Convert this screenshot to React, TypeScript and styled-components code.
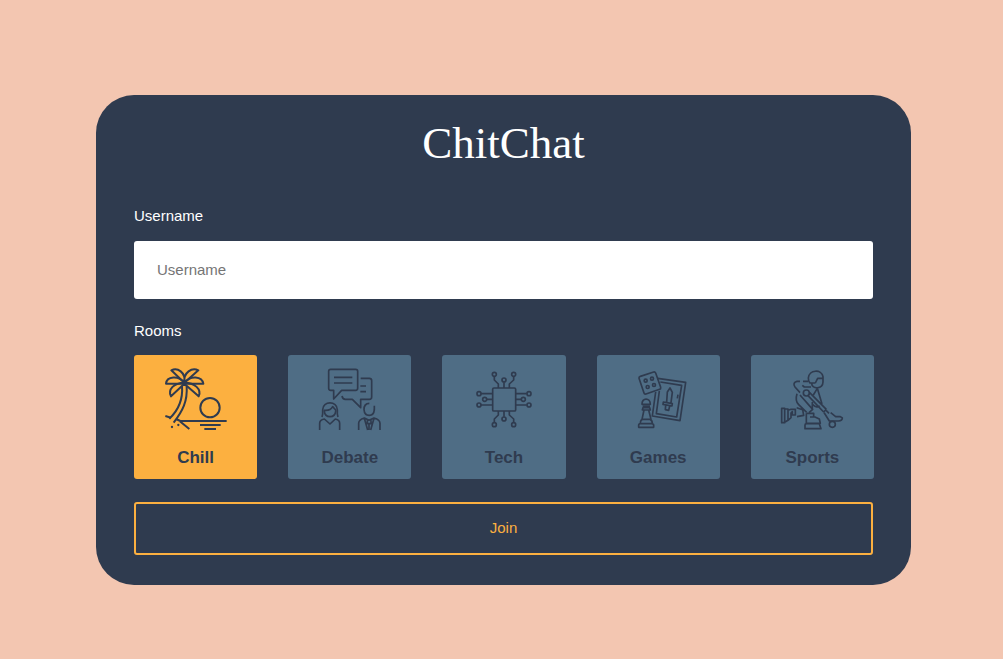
import React, { useState } from "react";
import styled, { createGlobalStyle } from "styled-components";

const navy = "#2f3b4f";
const amber = "#fcb040";
const slate = "#4f6d85";

const GlobalStyle = createGlobalStyle`
  *, *::before, *::after { box-sizing: border-box; }
  body {
    margin: 0;
    background: #f3c6b1;
    font-family: "Liberation Sans", Arial, sans-serif;
    font-size: 15px;
    line-height: 18px;
  }
`;

const Page = styled.main`
  min-height: 100vh;
  padding: 95px 92px 40px 96px;
`;

const Card = styled.form`
  display: flex;
  flex-direction: column;
  padding: 20px 38px 30px;
  border-radius: 38px;
  background: ${navy};
  color: #fff;
`;

const Title = styled.h1`
  margin: 0 0 36px;
  font-family: "Liberation Serif", "Times New Roman", serif;
  font-size: 45px;
  font-weight: 400;
  line-height: 56px;
  text-align: center;
`;

const FieldLabel = styled.label`
  margin-bottom: 16px;
`;

const TextInput = styled.input`
  width: 100%;
  height: 58px;
  margin-bottom: 23px;
  padding: 0 23px 2px;
  border: 0;
  border-radius: 3px;
  background: #fff;
  color: ${navy};
  font: inherit;
  &::placeholder { color: #757575; }
`;

const Rooms = styled.fieldset`
  min-width: 0;
  margin: 0 -1px 23px 0;
  padding: 0;
  border: 0;
`;

const RoomsLegend = styled.legend`
  margin-bottom: 15px;
  padding: 0;
`;

const RoomGrid = styled.div`
  display: grid;
  grid-template-columns: repeat(5, 1fr);
  gap: 31px;
`;

const RoomTile = styled.label<{ $active: boolean }>`
  position: relative;
  display: flex;
  flex-direction: column;
  align-items: center;
  height: 124px;
  padding-top: 5px;
  border-radius: 3px;
  background: ${(p) => (p.$active ? amber : slate)};
  color: ${navy};
  cursor: pointer;
`;

const RoomRadio = styled.input`
  position: absolute;
  inset: 0;
  width: 100%;
  height: 100%;
  margin: 0;
  opacity: 0;
  cursor: pointer;
`;

const RoomIcon = styled.svg`
  width: 80px;
  height: 80px;
  fill: none;
  stroke: currentColor;
  stroke-width: 5;
  stroke-linejoin: round;
`;

const RoomName = styled.span`
  margin-top: 8px;
  font-size: 17px;
  font-weight: 700;
  line-height: 20px;
`;

const JoinButton = styled.button`
  height: 53px;
  padding: 0 0 2px;
  border: 2px solid ${amber};
  border-radius: 3px;
  background: transparent;
  color: ${amber};
  font: inherit;
  cursor: pointer;
`;

const rooms = [
  {
    name: "Chill",
    art: (
      <g strokeWidth="6">
        <path d="M85 68 46 31C64 22 90 36 85 68 82 36 108 22 127 31L85 68" />
        <path d="M85 68C68 45 32 48 30 71H142C138 48 104 45 85 68" />
        <path d="M85 68C55 68 34 88 45 109L85 71 128 109C138 88 116 68 85 68" />
        <path d="M78 78C81 116 66 152 40 176M92 78C95 124 80 153 53 188" />
        <path d="M28 168 45 173M60 177 73 183H212M66 179 100 207M132 195H194M145 207H180" />
        <circle cx="162" cy="143" r="29" />
        <g fill="currentColor" stroke="none">
          <circle cx="48" cy="201" r="3.5" />
          <circle cx="67" cy="195" r="3.5" />
        </g>
      </g>
    ),
  },
  {
    name: "Debate",
    art: (
      <>
        <path d="M62 28H137Q143 28 143 34V85Q143 91 137 91H95L71 117V91H62Q56 91 56 85V34Q56 28 62 28Z" />
        <path d="M72 52H127M72 69H127M152 55H178Q185 55 185 62V111Q185 118 178 118H152V143L127 118H106Q98 118 96 108M151 78H168M151 95H168" />
        <path d="M36 171Q39 163 38 149C38 122 82 122 82 149Q81 163 84 171" />
        <path d="M43 151Q61 153 68 140L77 150V154C75 175 45 175 43 154Z" />
        <path d="M29 210V190Q29 180 43 177L60 192 76 177Q89 180 89 190V210" />
        <path d="M178 130C165 130 162 137 162 149C164 172 191 172 193 149V137" />
        <path d="M146 210V190Q146 179 163 174L177 181 192 174Q210 179 210 190V210M163 175 173 210M192 175 182 210M172 181V191H183V181M177 191V210" />
      </>
    ),
  },
  {
    name: "Tech",
    art: (
      <>
        <rect x="86" y="84" width="69" height="69" rx="4" />
        <path d="M103 84V72L91 60V50M120 84V67M136 84V72L149 60V50M103 153V165L91 177V187M120 153V170M136 153V165L149 177V187M86 101H51M86 118H68M86 135H51M155 101H188M155 118H171M155 135H188" />
        {[[91, 43], [149, 43], [120, 60], [45, 101], [62, 118], [45, 135], [195, 101], [178, 118], [195, 135], [91, 194], [149, 194], [120, 177]].map(([x, y]) => (
          <circle key={`${x}-${y}`} cx={x} cy={y} r="6" />
        ))}
      </>
    ),
  },
  {
    name: "Games",
    art: (
      <>
        <path d="M67 49 107 36Q111 35 113 39L128 82Q129 87 125 88L84 102Q79 103 78 99L63 55Q62 51 67 49Z" />
        <circle cx="83" cy="62" r="4.5" /><circle cx="102" cy="56" r="4.5" />
        <circle cx="89" cy="81" r="4.5" /><circle cx="108" cy="75" r="4.5" />
        <path d="M119 55 203 67 186 182 103 168 113 96M127 66 191 76 176 171 115 161 124 93M180 104 178 115" />
        <path d="M146 126 148 96 156 84 163 97 159 128M136 126 163 131 162 138 135 133ZM143 136 142 149 152 151 155 138" />
        <path d="M72 133C71 112 97 112 97 133ZM74 139H96M75 143H95L97 150H73ZM78 150 72 178H99L92 150M67 191Q67 178 75 178H96Q103 180 103 191ZM62 202V196Q62 191 67 191H101Q107 191 107 196V202Z" />
      </>
    ),
  },
  {
    name: "Sports",
    art: (
      <>
        <path d="M130 69H114Q109 65 109 54C111 28 149 27 153 50V66C152 88 120 89 119 70M130 69 137 55H153" />
        <path d="M109 64H93M84 64H75C66 66 63 73 69 81L84 98M91 76 97 81H117" />
        <circle cx="103" cy="99" r="9" />
        <path d="M108 107 155 156M113 98 163 148M136 85 124 105M136 85 150 132M122 134Q136 146 143 137" />
        <path d="M75 101C71 114 72 126 80 134L104 157M84 105 122 148 111 158M121 126V148M74 143 92 149 95 166 75 170" />
        <path d="M29 145H38V188H29ZM38 147H48V181L38 187M48 181 57 173V159L61 155V165H70V148H57L48 151" />
        <path d="M103 160V190H145L142 177 129 171H114M103 160H125V169M99 206V195Q99 191 104 191H142L147 206Z" />
        <path d="M155 156 163 148M155 156 172 183H199Q211 182 211 174L205 170H191L176 158M163 152 171 160" />
        <circle cx="181" cy="193" r="9" />
      </>
    ),
  },
];

export default function App() {
  const [room, setRoom] = useState("Chill");
  return (
    <>
      <GlobalStyle />
      <Page>
        <Card onSubmit={(e) => e.preventDefault()}>
          <Title>ChitChat</Title>
          <FieldLabel htmlFor="username">Username</FieldLabel>
          <TextInput id="username" name="username" type="text" placeholder="Username" />
          <Rooms>
            <RoomsLegend>Rooms</RoomsLegend>
            <RoomGrid>
              {rooms.map(({ name, art }) => (
                <RoomTile key={name} $active={room === name}>
                  <RoomRadio type="radio" name="room" value={name} checked={room === name} onChange={() => setRoom(name)} />
                  <RoomIcon viewBox="0 0 240 240" aria-hidden="true">{art}</RoomIcon>
                  <RoomName>{name}</RoomName>
                </RoomTile>
              ))}
            </RoomGrid>
          </Rooms>
          <JoinButton type="submit">Join</JoinButton>
        </Card>
      </Page>
    </>
  );
}
